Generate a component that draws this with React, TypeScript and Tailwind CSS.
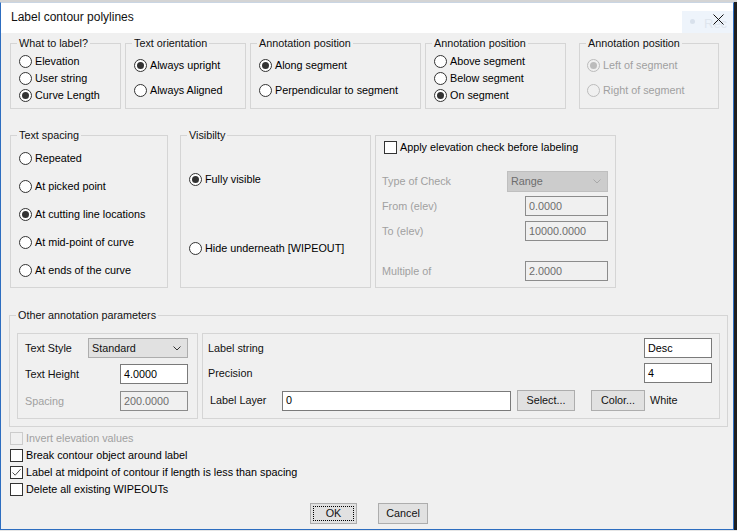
import React from "react";

type RadioProps = { label: string; checked?: boolean; disabled?: boolean };

const Radio = ({ label, checked, disabled }: RadioProps) => (
  <div className="flex h-[17px] items-center gap-[3px]">
    <span
      className={`flex h-[13px] w-[13px] shrink-0 items-center justify-center rounded-full border ${
        disabled ? "border-[#bcbcbc] bg-[#f0f0f0]" : "border-[#333333] bg-white"
      }`}
    >
      {checked && (
        <span className={`h-[7px] w-[7px] rounded-full ${disabled ? "bg-[#bcbcbc]" : "bg-[#333333]"}`} />
      )}
    </span>
    <span className={`whitespace-nowrap leading-[13px] ${disabled ? "text-[#a0a0a0]" : "text-black"}`}>{label}</span>
  </div>
);

const Check = ({ label, checked, disabled }: RadioProps) => (
  <div className="flex h-[17px] items-center gap-[3px]">
    <span
      className={`flex h-[13px] w-[13px] shrink-0 items-center justify-center border ${
        disabled ? "border-[#cccccc] bg-[#f0f0f0]" : "border-[#333333] bg-white"
      }`}
    >
      {checked && (
        <svg width="11" height="11" viewBox="0 0 11 11">
          <path d="M1.5 5.5 L4.2 8.2 L9.6 2.2" fill="none" stroke="#4d4d4d" strokeWidth="1" />
        </svg>
      )}
    </span>
    <span className={`whitespace-nowrap leading-[13px] ${disabled ? "text-[#a0a0a0]" : "text-black"}`}>{label}</span>
  </div>
);

const Group = ({ title, className, children }: { title?: string; className: string; children: React.ReactNode }) => (
  <div className={`relative shrink-0 border border-[#d5d5d5] ${className}`}>
    {title && (
      <span className="absolute -top-[8px] left-[6px] bg-[#f0f0f0] px-[2px] leading-[14px] whitespace-nowrap">{title}</span>
    )}
    {children}
  </div>
);

const Field = ({ value, className, disabled }: { value: string; className: string; disabled?: boolean }) => (
  <div
    className={`flex h-[20px] shrink-0 items-center border pl-[3px] leading-[13px] ${
      disabled ? "border-[#8c8c8c] bg-[#f0f0f0] text-[#6d6d6d]" : "border-[#7a7a7a] bg-white text-black"
    } ${className}`}
  >
    {value}
  </div>
);

const Chevron = ({ color }: { color: string }) => (
  <svg width="8" height="5" viewBox="0 0 8 5">
    <path d="M0.5 0.5 L4 4 L7.5 0.5" fill="none" stroke={color} strokeWidth="1" />
  </svg>
);

const Button = ({ label, className, focused }: { label: string; className: string; focused?: boolean }) => (
  <div
    className={`relative flex h-[21px] shrink-0 items-center justify-center border border-[#adadad] bg-[#e1e1e1] leading-[13px] ${className}`}
  >
    {focused && <span className="absolute inset-[2px] border border-dotted border-black" />}
    {label}
  </div>
);

export default function App() {
  return (
    <div className="h-[531px] w-[737px] overflow-hidden bg-[#1e1e1e] font-['Liberation_Sans',Arial,sans-serif] text-[10.8px] text-[#111111]">
      <div className="h-[2px] w-[737px] bg-[#d4d4d4]" />
      <div className="flex h-[528px] w-[734px] flex-col border border-[#2d6dc0] border-t-[#c9d5e3] bg-[#f0f0f0]">
        {/* Title bar */}
        <div className="relative flex h-[30px] shrink-0 items-center bg-white pb-[2px] pl-[10px] text-[12px]">
          <span>Label contour polylines</span>
          <div className="absolute right-0 top-[8px] h-[22px] w-[51px] bg-[#eef4fb]">
            <span className="absolute left-[8px] top-[8px] h-[5px] w-[5px] rounded-full bg-[#d8e1ec]" />
            <span className="absolute left-[22px] top-[3px] text-[13px] text-[#dfe6ee]">Rec</span>
          </div>
          <svg className="absolute right-[9px] top-[11px]" width="11" height="11" viewBox="0 0 11 11">
            <path d="M0.5 0.5 L10.5 10.5 M10.5 0.5 L0.5 10.5" stroke="#111" strokeWidth="1" />
          </svg>
        </div>

        <div className="flex flex-col pl-[9px]">
          {/* Row 1 */}
          <div className="mt-[10px] flex h-[66px]">
            <Group title="What to label?" className="h-[66px] w-[111px]">
              <div className="flex flex-col pl-[8px] pt-[9px]">
                <Radio label="Elevation" />
                <Radio label="User string" />
                <Radio label="Curve Length" checked />
              </div>
            </Group>
            <Group title="Text orientation" className="ml-[4px] h-[66px] w-[121px]">
              <div className="flex flex-col gap-[8px] pl-[8px] pt-[13px]">
                <Radio label="Always upright" checked />
                <Radio label="Always Aligned" />
              </div>
            </Group>
            <Group title="Annotation position" className="ml-[4px] h-[66px] w-[171px]">
              <div className="flex flex-col gap-[8px] pl-[8px] pt-[13px]">
                <Radio label="Along segment" checked />
                <Radio label="Perpendicular to segment" />
              </div>
            </Group>
            <Group title="Annotation position" className="ml-[4px] h-[66px] w-[141px]">
              <div className="flex flex-col pl-[8px] pt-[9px]">
                <Radio label="Above segment" />
                <Radio label="Below segment" />
                <Radio label="On segment" checked />
              </div>
            </Group>
            <Group title="Annotation position" className="ml-[13px] h-[66px] w-[140px]">
              <div className="flex flex-col gap-[8px] pl-[7px] pt-[13px]">
                <Radio label="Left of segment" checked disabled />
                <Radio label="Right of segment" disabled />
              </div>
            </Group>
          </div>

          {/* Row 2 */}
          <div className="mt-[26px] flex h-[153px]">
            <Group title="Text spacing" className="h-[153px] w-[158px]">
              <div className="flex flex-col gap-[11px] pl-[8px] pt-[14px]">
                <Radio label="Repeated" />
                <Radio label="At picked point" />
                <Radio label="At cutting line locations" checked />
                <Radio label="At mid-point of curve" />
                <Radio label="At ends of the curve" />
              </div>
            </Group>
            <Group title="Visibilty" className="ml-[12px] h-[153px] w-[191px]">
              <div className="flex flex-col gap-[52px] pl-[8px] pt-[35px]">
                <Radio label="Fully visible" checked />
                <Radio label="Hide underneath [WIPEOUT]" />
              </div>
            </Group>
            <Group className="ml-[4px] h-[153px] w-[241px]">
              <div className="flex flex-col pt-[3px]">
                <div className="pl-[8px]">
                  <Check label="Apply elevation check before labeling" />
                </div>
                <div className="mt-[15px] flex items-center pl-[6px]">
                  <span className="w-[125px] text-[#a0a0a0]">Type of Check</span>
                  <div className="flex h-[21px] w-[101px] items-center justify-between border border-[#bfbfbf] bg-[#cccccc] pl-[3px] pr-[6px] text-[#6d6d6d]">
                    <span>Range</span>
                    <Chevron color="#a8a8a8" />
                  </div>
                </div>
                <div className="mt-[4px] flex items-center pl-[6px]">
                  <span className="w-[143px] text-[#a0a0a0]">From (elev)</span>
                  <Field value="0.0000" className="w-[83px]" disabled />
                </div>
                <div className="mt-[5px] flex items-center pl-[6px]">
                  <span className="w-[143px] text-[#a0a0a0]">To (elev)</span>
                  <Field value="10000.0000" className="w-[83px]" disabled />
                </div>
                <div className="mt-[20px] flex items-center pl-[6px]">
                  <span className="w-[143px] text-[#a0a0a0]">Multiple of</span>
                  <Field value="2.0000" className="w-[83px]" disabled />
                </div>
              </div>
            </Group>
          </div>

          {/* Row 3 */}
          <Group title="Other annotation parameters" className="-ml-[1px] mt-[27px] h-[112px] w-[719px]">
            <div className="ml-[7px] mt-[17px] flex gap-[4px]">
              <div className="flex h-[86px] w-[181px] flex-col border border-[#d5d5d5] pl-[7px] pt-[4px]">
                <div className="flex h-[20px] items-center">
                  <span className="w-[63px]">Text Style</span>
                  <div className="flex h-[20px] w-[100px] items-center justify-between border border-[#adadad] bg-[#e1e1e1] pl-[3px] pr-[6px]">
                    <span>Standard</span>
                    <Chevron color="#333333" />
                  </div>
                </div>
                <div className="mt-[6px] flex h-[20px] items-center">
                  <span className="w-[95px]">Text Height</span>
                  <Field value="4.0000" className="w-[68px]" />
                </div>
                <div className="mt-[7px] flex h-[20px] items-center">
                  <span className="w-[95px] text-[#a0a0a0]">Spacing</span>
                  <Field value="200.0000" className="w-[68px]" disabled />
                </div>
              </div>
              <div className="flex h-[86px] w-[518px] flex-col border border-[#d5d5d5] pl-[5px] pr-[7px] pt-[4px]">
                <div className="flex h-[20px] items-center justify-between">
                  <span>Label string</span>
                  <Field value="Desc" className="w-[68px]" />
                </div>
                <div className="mt-[5px] flex h-[20px] items-center justify-between">
                  <span>Precision</span>
                  <Field value="4" className="w-[68px]" />
                </div>
                <div className="mt-[7px] flex h-[21px] items-center">
                  <span className="ml-[2px] w-[72px]">Label Layer</span>
                  <Field value="0" className="w-[229px]" />
                  <Button label="Select..." className="ml-[6px] w-[58px]" />
                  <Button label="Color..." className="ml-[16px] w-[54px]" />
                  <span className="ml-[5px]">White</span>
                </div>
              </div>
            </div>
          </Group>

          {/* Checkboxes */}
          <div className="mt-[3px] flex flex-col">
            <Check label="Invert elevation values" disabled />
            <Check label="Break contour object around label" />
            <Check label="Label at midpoint of contour if length is less than spacing" checked />
            <Check label="Delete all existing WIPEOUTs" />
          </div>

          {/* Buttons */}
          <div className="mt-[5px] flex">
            <Button label="OK" className="ml-[300px] w-[47px]" focused />
            <Button label="Cancel" className="ml-[21px] w-[50px]" />
          </div>
        </div>
      </div>
      <div className="h-px w-[737px] bg-[#e6e6e6]" />
    </div>
  );
}
